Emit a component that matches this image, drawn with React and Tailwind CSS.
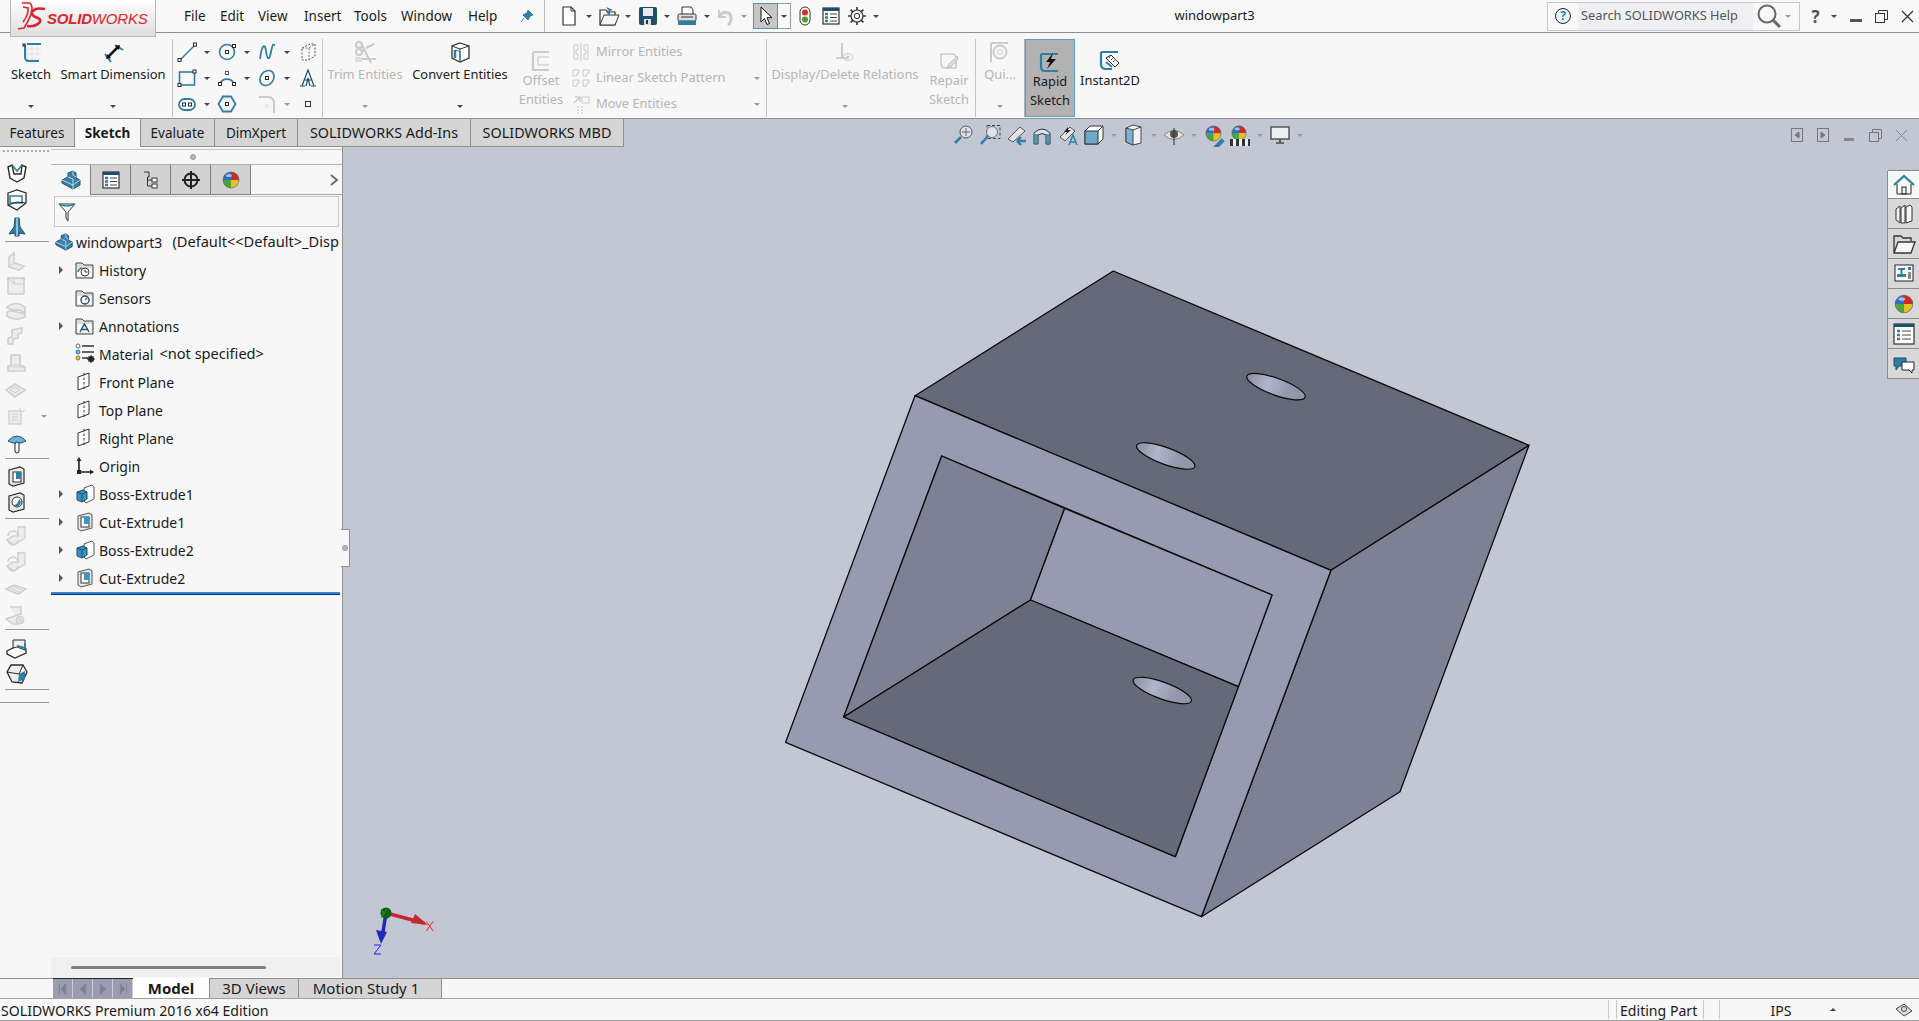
import React from "react";

const blue = "#2e7fa6";
const navy = "#1c4f6e";
const ink = "#2b2b2b";
const off = "#cbcbcb";

const Svg = ({ s = 20, children }) => (
  <svg width={s} height={s} viewBox={`0 0 ${s} ${s}`} fill="none" className="shrink-0">{children}</svg>
);

const Down = ({ off: dim }) => (
  <div className={dim ? "w-0 h-0 border-x-[3px] border-x-transparent border-t-[3px] border-t-[#999]" : "w-0 h-0 border-x-[3px] border-x-transparent border-t-[3px] border-t-[#444]"} />
);

const Pt = ({ x, y, c = ink }) => <rect x={x - 1.5} y={y - 1.5} width="3" height="3" fill="#fff" stroke={c} />;

// ---- ribbon icons
const SketchIco = () => (
  <Svg s={24}>
    <path d="M7 4H22M7 9H22M7 14H22M7 19H22M8 4V22M13 4V22M18 4V22" stroke="#e2e2e2" />
    <path d="M6 5V17Q6 21 10 21H20" stroke={blue} strokeWidth="2" />
    <path d="M8 4H22" stroke={blue} strokeWidth="2" />
    <path d="M3 5H7M5 3V7M3.5 3.5L6.5 6.5M6.5 3.5L3.5 6.5" stroke={navy} />
  </Svg>
);
const DimIco = () => (
  <Svg s={24}>
    <path d="M4 14L10 22M14 5L22 10" stroke={blue} strokeWidth="2" />
    <path d="M7 17L17 7" stroke="#111" strokeWidth="2.5" />
    <path d="M5 19L6 14L10 18Z M19 5L18 10L14 6Z" fill="#111" />
  </Svg>
);
const LineIco = () => (<Svg><path d="M3 18L18 3" stroke={blue} strokeWidth="1.5" /><Pt x={2.5} y={18} /><Pt x={18} y={2.5} /></Svg>);
const RectIco = () => (<Svg><rect x="2.5" y="4" width="15" height="13" stroke={blue} strokeWidth="1.6" /><Pt x={2.5} y={17} /><Pt x={17.5} y={3.5} /></Svg>);
const SlotIco = () => (<Svg><rect x="2" y="5" width="16" height="11" rx="5.5" stroke={blue} strokeWidth="1.8" /><Pt x={7} y={10.5} /><Pt x={13} y={10.5} /></Svg>);
const CircleIco = () => (<Svg><circle cx="10" cy="10" r="7.5" stroke={blue} strokeWidth="1.6" /><Pt x={10} y={10} /><Pt x={17} y={4} /></Svg>);
const ArcIco = () => (<Svg><path d="M3 16A7.5 7.5 0 0 1 17 16" stroke={blue} strokeWidth="1.8" /><Pt x={3} y={16} /><Pt x={17} y={16} /><Pt x={10} y={5} c="#555" /></Svg>);
const HexIco = () => (<Svg><path d="M6 2.5H14L18.5 10L14 17.5H6L1.5 10Z" stroke={blue} strokeWidth="1.8" /><Pt x={10} y={10} /></Svg>);
const SplineIco = () => (<Svg><path d="M3 17C5 2 8 1 9 9S12 20 14 10S16 3 18 3" stroke={blue} strokeWidth="1.8" /></Svg>);
const EllipseIco = () => (<Svg><ellipse cx="10" cy="10" rx="6.5" ry="8" transform="rotate(38 10 10)" stroke={blue} strokeWidth="1.7" /><Pt x={10} y={10} /></Svg>);
const PlaneIco = () => (<Svg><path d="M4 6L12 2H17V14L10 18H4Z" stroke="#555" strokeDasharray="2 1.5" /><path d="M4 6H11V18M11 6L17 2" stroke="#777" strokeDasharray="2 1.5" /></Svg>);
const AIco = () => (<Svg><path d="M2 18H7M13 18H18M4 18L10 2L16 18M7 12H13M8 18L10 10L12 18" stroke={navy} strokeWidth="1.2" /></Svg>);
const FilletIco = () => (<Svg><path d="M2 3H11Q17 3 17 10V19" stroke={off} strokeWidth="2" /><path d="M8 10L12 14M12 10L8 14" stroke="#e0e0e0" /></Svg>);
const PointIco = () => (<Svg><rect x="7.5" y="7.5" width="5" height="5" stroke="#333" fill="#fff" /></Svg>);
const TrimIco = () => (<Svg s={26}><path d="M4 20H24M9 4L19 24M6 8L12 13" stroke={off} strokeWidth="2" /><circle cx="7" cy="6" r="3" stroke={off} strokeWidth="2" /><circle cx="7" cy="13" r="3" stroke={off} strokeWidth="2" /><path d="M14 9L22 5" stroke={off} strokeWidth="2" /><rect x="3" y="18" width="7" height="5" fill="#dedede" /></Svg>);
const ConvertIco = () => (
  <Svg s={24}>
    <path d="M12 3L21 6V18L12 22L4 18V6Z" fill="#fff" stroke="#333" strokeWidth="1.3" />
    <path d="M4 6L12 9L21 6M12 9V22" stroke="#333" />
    <path d="M7 10V18" stroke={blue} strokeWidth="2.5" /><path d="M7 10L12 11.5V20" stroke={blue} />
  </Svg>
);
const OffsetIco = () => (<Svg s={26}><path d="M5 4H21M5 4V22H21" stroke={off} strokeWidth="2.2" /><path d="M10 9H21M10 9V17H21" stroke="#dcdcdc" strokeWidth="2" /></Svg>);
const MirrorIco = () => (<Svg><path d="M3 3H7V8H5V12H7V17H3ZM17 3H13V8H15V12H13V17H17ZM10 1V19" stroke={off} /></Svg>);
const PatternIco = () => (<Svg><path d="M2 2H8V5H6V8H2ZM12 2H18V5H16V8H12ZM2 12H8V15H6V18H2ZM12 12H18V15H16V18H12Z" stroke={off} /></Svg>);
const MoveIco = () => (<Svg><path d="M3 9L9 3M4 3H9V8" stroke={off} strokeWidth="1.5" /><rect x="11" y="3" width="7" height="6" stroke={off} /><path d="M6 13H8M10 13H12M6 16H8M10 16H12M6 19H8M10 19H12" stroke="#dcdcdc" strokeWidth="2" /></Svg>);
const RelIco = () => (<Svg s={24}><path d="M9 3V18M3 18H15" stroke={off} strokeWidth="2" /><ellipse cx="15" cy="17" rx="5" ry="3.5" stroke={off} /><circle cx="15" cy="17" r="1.5" fill={off} /></Svg>);
const RepairIco = () => (<Svg s={24}><path d="M4 5H17L19 8V19H6L4 16Z" stroke={off} strokeWidth="1.6" /><path d="M20 7L12 15L10 19L14 18L21 10Z" fill="#dcdcdc" stroke="#bdbdbd" /></Svg>);
const QuickIco = () => (<Svg s={24}><path d="M3 3H20M3 3V22" stroke={off} strokeWidth="2" /><circle cx="12" cy="12" r="6.5" stroke={off} strokeWidth="2" /><circle cx="12" cy="12" r="2.5" stroke={off} /></Svg>);
const RapidIco = () => (
  <Svg s={24}>
    <path d="M3 4H20M3 4V17Q3 21 7 21H20" stroke={blue} strokeWidth="2.2" />
    <path d="M15 3L8 12H12L9 19L18 9H13Z" fill="#111" />
  </Svg>
);
const InstantIco = () => (
  <Svg s={24}>
    <path d="M3 3H20M3 3V15Q3 20 8 20H14" stroke={blue} strokeWidth="2.2" />
    <path d="M8 9L13 6L21 14L17 18Z" fill="#fff" stroke="#222" />
    <path d="M11 9L12 7.5M13 11L14.5 9.5M15 13L16.5 11.5" stroke="#222" />
    <path d="M8 13L14 18" stroke={blue} strokeWidth="2" />
  </Svg>
);

// ---- quick access icons
const NewIco = () => (<Svg s={22}><path d="M5 2H13L17 6V20H5Z" fill="#fff" stroke="#333" strokeWidth="1.2" /><path d="M13 2V6H17" stroke="#333" /></Svg>);
const OpenIco = () => (<Svg s={24}><path d="M3 21V6H9L11 8H18V21Z" fill="#fff" stroke="#333" strokeWidth="1.2" /><path d="M3 21L7 11H22L18 21Z" fill="#f5f5f5" stroke="#333" /><path d="M9 3L16 6L13 7V12L9 8L12 7Z" fill={blue} /></Svg>);
const SaveIco = () => (<Svg s={24}><rect x="3" y="3" width="18" height="18" rx="2" fill={navy} /><rect x="7" y="4" width="10" height="8" fill="#e9e9e9" /><rect x="8" y="15" width="7" height="6" fill="#ddd" /><rect x="10" y="16" width="2" height="4" fill="#333" /></Svg>);
const PrintIco = () => (<Svg s={24}><path d="M7 3H16L18 6V11H7Z" fill="#fff" stroke="#333" /><rect x="3" y="10" width="18" height="7" rx="1.5" fill="#dfdfdf" stroke="#333" /><rect x="3" y="17" width="18" height="4" fill={blue} /><path d="M6 13H18" stroke="#333" /></Svg>);
const UndoIco = () => (<Svg s={22}><path d="M4 5V12H11" stroke={off} strokeWidth="2" /><path d="M4 12C8 5 17 6 16 15C16 17 14 19 13 20" stroke={off} strokeWidth="3" /></Svg>);
const CursorIco = () => (<Svg s={22}><path d="M6 2V17L9.5 13.5L12 19.5L14.5 18.5L12 12.7H17Z" fill="#fff" stroke="#111" /></Svg>);
const LightIco = () => (<Svg s={20}><rect x="5" y="1" width="10" height="18" rx="5" fill="#fff" stroke="#333" /><circle cx="10" cy="6.5" r="3" fill="#d92b2b" /><circle cx="10" cy="13.5" r="3" fill="#4b9e2a" /></Svg>);
const ListIco = ({ s = 20 }) => (
  <Svg s={s}>
    <rect x="2" y="2" width={s - 4} height={s - 4} fill="#fff" stroke="#333" strokeWidth="1.2" />
    <rect x="2" y="2" width={s - 4} height="3" fill={navy} />
    <path d={s > 20 ? "M5 9H8M5 13H8M5 17H8" : "M4 8H7M4 11.5H7M4 15H7"} stroke={blue} strokeWidth="2.5" />
    <path d={s > 20 ? "M10 9H19M10 13H19M10 17H19" : "M9 8H16M9 11.5H16M9 15H16"} stroke="#444" />
  </Svg>
);
const GearIco = () => (<Svg s={20}><circle cx="10" cy="10" r="6" stroke="#333" strokeWidth="1.2" /><circle cx="10" cy="10" r="2.7" stroke="#333" /><path d="M10 1V4M10 16V19M1 10H4M16 10H19M3.6 3.6L5.8 5.8M14.2 14.2L16.4 16.4M3.6 16.4L5.8 14.2M14.2 5.8L16.4 3.6" stroke="#333" strokeWidth="1.6" /></Svg>);
const Ball = ({ s = 20 }) => (
  <svg width={s} height={s} viewBox="0 0 20 20" className="shrink-0">
    <path d="M10 10V2A8 8 0 0 1 18 10Z" fill="#cf2a2a" />
    <path d="M10 10H18A8 8 0 0 1 10 18Z" fill="#e4c12a" />
    <path d="M10 10V18A8 8 0 0 1 2 10Z" fill="#4aa53a" />
    <path d="M10 10H2A8 8 0 0 1 10 2Z" fill="#2f6fc9" />
    <circle cx="10" cy="10" r="8" fill="none" stroke="#555" strokeWidth=".6" />
    <ellipse cx="8" cy="5.5" rx="3" ry="1.6" fill="#fff" opacity=".55" />
  </svg>
);

// ---- heads-up toolbar
const HuZoomFit = () => (<Svg s={22}><circle cx="13" cy="8" r="6" fill="#dde2ea" stroke="#555" /><path d="M8 13L2 19" stroke={blue} strokeWidth="2.5" /><path d="M13 4V12M9 8H17" stroke="#666" /></Svg>);
const HuZoomArea = () => (<Svg s={22}><rect x="8" y="1.5" width="13" height="13" stroke="#444" strokeDasharray="3 2" /><circle cx="13" cy="8" r="5.5" fill="#dfe4ec" stroke="#777" /><path d="M9 12L2 20" stroke={blue} strokeWidth="2.5" /></Svg>);
const HuPrev = () => (<Svg s={22}><path d="M3 15L15 3L20 7L8 18Z" fill="#e4e4e4" stroke="#555" /><path d="M12 17H21M12 17L16 13M12 17L16 21" stroke={blue} strokeWidth="2.4" /></Svg>);
const HuSection = () => (<Svg s={22}><path d="M3 9Q11 1 19 9V20H15V11Q11 8 7 11V20H3Z" fill="#dfe4ea" stroke="#333" /><path d="M3 10H7V20H3ZM15 10H19V20H15Z" fill={blue} opacity=".75" /></Svg>);
const HuDyn = () => (<Svg s={22}><path d="M3 13L13 3L18 7L8 17Z" fill="#e4e4e4" stroke="#555" /><path d="M11 3L7 8H10L8 11L14 6H11Z" fill="#222" /><path d="M12 21L16 11L20 21M13.5 18H18.5" stroke={blue} strokeWidth="1.4" /></Svg>);
const HuOrient = () => (<Svg s={22}><path d="M2 7L7 2H20V15L15 20H2Z" fill="#fff" stroke="#333" /><rect x="2" y="7" width="13" height="13" fill="#6fa9c9" stroke="#333" /><path d="M15 7L20 2" stroke="#333" /></Svg>);
const HuDisplay = () => (<Svg s={22}><path d="M10 1L18 3V19L10 21L3 18V4Z" fill="#f2f2f2" stroke="#444" /><path d="M3 4L10 6V21L3 18Z" fill="#7fb2cf" stroke="#444" /><path d="M10 6L18 3" stroke="#444" /></Svg>);
const HuEye = () => (<Svg s={22}><path d="M1 11Q11 2 21 11Q11 20 1 11Z" fill="#e3e3e3" stroke="#888" /><circle cx="11" cy="10" r="4" fill="#555" /><path d="M11 4V21" stroke="#333" /></Svg>);
const HuAppear = () => (<div className="relative w-[20px] h-[22px]"><Ball s={19} /><div className="absolute right-[-1px] bottom-0 w-[12px] h-[4px] bg-[#2e7fa6] -rotate-45" /></div>);
const HuScene = () => (<div className="relative w-[20px] h-[22px]"><Ball s={18} /><div className="absolute left-0 bottom-0 w-[20px] h-[7px] bg-[repeating-linear-gradient(90deg,#333_0_3px,#eee_3px_6px)]" /></div>);
const HuMonitor = () => (<Svg s={22}><rect x="2" y="3" width="18" height="12" fill="#eee" stroke="#444" strokeWidth="1.3" /><path d="M11 15V18M7 19H15" stroke="#444" strokeWidth="1.6" /></Svg>);

// ---- left command strip
const Part = ({ s = 22 }) => (
  <svg width={s} height={s} viewBox="0 0 22 22" className="shrink-0">
    <path d="M2 11L8 8V4L13 2L16 4V9L20 11V16L13 20L2 14Z" fill="#3a7fa8" stroke="#1c4f6e" />
    <path d="M2 11L13 16V20M13 16L20 11M8 8L13 10V16M13 2V6L16 8" stroke="#bcd8e8" fill="none" />
  </svg>
);
const StripShape = ({ dim, kind }) => {
  const line = dim ? "#cfcfcf" : "#2b2b2b";
  const fill = dim ? "#ececec" : "#fff";
  const acc = dim ? "#dcdcdc" : blue;
  if (kind === "u") return (<Svg s={24}><path d="M3 6L7 4L9 13L16 13L17 4L21 6L19 17L12 21L5 17Z" fill={fill} stroke={line} strokeWidth="1.4" /><path d="M7 4L12 10L17 4" stroke={acc} strokeWidth="1.5" /></Svg>);
  if (kind === "frame") return (<Svg s={24}><path d="M3 5L12 2L21 5V15L12 22L3 17Z" fill={fill} stroke={line} strokeWidth="1.3" /><path d="M5 8H17V15H5Z" fill="none" stroke={acc} strokeWidth="1.6" /><path d="M3 17L12 14L21 15" stroke={line} /></Svg>);
  if (kind === "post") return (<Svg s={24}><path d="M10 3H14L15 12L20 19L14 18V21H10V18L4 19L9 12Z" fill={acc} stroke={navy} /><path d="M12 3V21" stroke="#fff" /></Svg>);
  if (kind === "mush") return (<Svg s={24}><path d="M3 10Q12 0 21 10L16 12H8Z" fill="#6fb4d8" stroke={navy} /><rect x="10" y="11" width="4" height="11" rx="2" fill="#fff" stroke="#222" /></Svg>);
  if (kind === "cut") return (<Svg s={22}><path d="M4 5L15 2L19 4V18L8 21L4 19Z" fill="#e8e8e8" stroke={line} strokeWidth="1.2" /><rect x="8" y="7" width="8" height="10" fill="#fff" stroke={line} /><rect x="11" y="7" width="5" height="7" fill={blue} /></Svg>);
  if (kind === "cutc") return (<Svg s={22}><path d="M4 5L15 2L19 4V18L8 21L4 19Z" fill="#e8e8e8" stroke={line} strokeWidth="1.2" /><circle cx="12" cy="11" r="5" fill="#fff" stroke={line} /><path d="M8 14Q13 14 14 8L16 11Q15 16 10 16Z" fill={blue} /></Svg>);
  if (kind === "sheet") return (<Svg s={24}><path d="M2 15L12 10L21 13V17L10 22L2 18Z" fill="#fff" stroke={line} strokeWidth="1.3" /><path d="M8 4H20V14L12 11L8 12Z" fill="#eee" stroke={line} /><path d="M12 10L20 12V7" stroke={acc} strokeWidth="2" /></Svg>);
  if (kind === "box") return (<Svg s={24}><path d="M6 3H18L22 10L17 21L7 20L2 10Z" fill="#eee" stroke={line} strokeWidth="1.3" /><path d="M13 20L20 17V9L14 12Z" fill={acc} /><path d="M2 10L14 12L18 3" stroke={line} /></Svg>);
  if (kind === "a") return (<Svg s={22}><path d="M4 7L9 3V13L19 16L14 20L4 17Z" fill={fill} stroke={line} strokeWidth="1.6" /><path d="M9 13L4 17" stroke={line} /></Svg>);
  if (kind === "b") return (<Svg s={22}><rect x="3" y="3" width="16" height="16" fill={fill} stroke={line} strokeWidth="1.6" /><path d="M9 3V9H19M9 9L3 3" stroke={line} /></Svg>);
  if (kind === "c") return (<Svg s={22}><path d="M2 7Q11 0 20 7V13Q13 8 7 11L20 14V17Q10 22 2 16V12L8 10L2 8Z" fill={fill} stroke={line} strokeWidth="1.6" /></Svg>);
  if (kind === "d") return (<Svg s={22}><path d="M7 4L17 2V7L13 8V12L8 13V18H3V12L7 11Z" fill={fill} stroke={line} strokeWidth="1.6" /></Svg>);
  if (kind === "e") return (<Svg s={22}><path d="M6 3H15V13L20 15V19H3V14L6 13Z" fill={fill} stroke={line} strokeWidth="1.6" /><path d="M6 13H15M3 15H20" stroke={line} /></Svg>);
  if (kind === "f") return (<Svg s={22}><path d="M1 11L10 5L20 11L10 18Z" fill={fill} stroke={line} strokeWidth="1.6" /><path d="M5 11L10 8L15 11L10 14Z" stroke={line} /></Svg>);
  if (kind === "g") return (<Svg s={22}><rect x="4" y="5" width="12" height="13" fill={fill} stroke={line} strokeWidth="1.3" /><path d="M14 2L16 5M17 6L20 4M7 8H13M7 11H13M7 14H13" stroke={line} /></Svg>);
  if (kind === "h") return (<Svg s={22}><path d="M13 2H20V13L9 20L2 15L8 11H13Z" fill={fill} stroke={line} strokeWidth="1.4" /><path d="M3 11A5 5 0 0 1 13 11M13 15A5 5 0 0 1 3 15" stroke={line} strokeWidth="1.6" /></Svg>);
  if (kind === "i") return (<Svg s={22}><path d="M1 12L9 8L21 12L13 17Z" fill={fill} stroke={line} strokeWidth="1.6" /><path d="M5 11L14 15M8 9L17 13" stroke={line} /></Svg>);
  return (<Svg s={22}><path d="M5 3H16V10L1 15L8 20H14" fill={fill} stroke={line} strokeWidth="1.6" /><circle cx="15" cy="16" r="4" fill="#ddd" stroke={line} /><path d="M12 13L18 19" stroke={line} /></Svg>);
};

const stripRows = [
  { h: "h-[27px]", kind: "u" },
  { h: "h-[27px]", kind: "frame" },
  { h: "h-[27px]", kind: "post" },
  { sep: "mt-px mb-[6px] ml-[5px]" },
  { h: "h-[25px]", kind: "a", dim: true },
  { h: "h-[25px]", kind: "b", dim: true },
  { h: "h-[25px]", kind: "c", dim: true },
  { h: "h-[27px]", kind: "d", dim: true },
  { h: "h-[26px]", kind: "e", dim: true },
  { h: "h-[27px]", kind: "f", dim: true },
  { h: "h-[27px]", kind: "g", dim: true, arrow: true },
  { h: "h-[25px]", kind: "mush" },
  { sep: "mt-[3px] mb-[4px] ml-[5px]" },
  { h: "h-[26px]", kind: "cut" },
  { h: "h-[26px]", kind: "cutc" },
  { sep: "mt-[3px] mb-[4px] ml-[5px]" },
  { h: "h-[26px]", kind: "h", dim: true },
  { h: "h-[26px]", kind: "h", dim: true },
  { h: "h-[26px]", kind: "i", dim: true },
  { h: "h-[27px]", kind: "j", dim: true },
  { sep: "mt-px mb-[5px] ml-[5px]" },
  { h: "h-[26px]", kind: "sheet" },
  { h: "h-[26px]", kind: "box" },
  { sep: "mt-[2px] ml-[5px]" },
  { sep: "mt-[12px]" },
];

// ---- tree icons
const Folder = ({ children }) => (
  <svg width="20" height="20" viewBox="0 0 20 20" className="shrink-0">
    <path d="M1 18V3H7L9 5H18V18Z" fill="#dcdcdc" stroke="#444" />
    <path d="M2.5 8H16.5V16.5H2.5Z" fill="#fff" />
    {children}
  </svg>
);
const HistoryIco = () => (<Folder><circle cx="10" cy="12" r="4" fill="#fff" stroke="#333" /><path d="M3 12A5 5 0 0 1 7 8" stroke={blue} strokeWidth="1.5" fill="none" /><path d="M10 9.5V12H12.5" stroke="#333" fill="none" /></Folder>);
const SensorIco = () => (<Folder><circle cx="10" cy="12" r="4" fill="#fff" stroke={navy} strokeWidth="1.4" /><path d="M10 12L12.5 9.5" stroke="#d33" strokeWidth="1.3" /></Folder>);
const AnnotIco = () => (<Folder><path d="M5 16L9.5 8L14 16M7 13.5H12" stroke={navy} strokeWidth="1.5" fill="none" /></Folder>);
const MaterialIco = () => (
  <Svg s={22}>
    <circle cx="3" cy="3" r="2" fill="#fff" stroke="#666" /><circle cx="3" cy="9" r="2" fill="#6fb4d8" stroke="#2e7fa6" /><circle cx="3" cy="15" r="2" fill="#e8c42c" stroke="#8c7a1c" />
    <path d="M7 3H19M7 9H19M7 15H13" stroke="#333" strokeWidth="1.6" />
    <circle cx="16" cy="16" r="3" fill="#222" /><circle cx="16" cy="16" r="1" fill="#fff" />
    <path d="M16 12V20M12 16H20M13.5 13.5L18.5 18.5M18.5 13.5L13.5 18.5" stroke="#222" />
  </Svg>
);
const PlaneTree = () => (<Svg s={20}><path d="M3 5L14 1V14L3 18Z" fill="#fff" stroke="#333" /><path d="M9 1V19" stroke="#333" strokeDasharray="2.5 2" /></Svg>);
const OriginIco = () => (<Svg s={20}><path d="M4 3V16H18" stroke="#222" strokeWidth="1.6" /><path d="M4 1L1.5 5H6.5Z M19 16L15 13.5V18.5Z" fill="#222" /><rect x="2" y="14" width="4" height="4" fill="#222" /></Svg>);
const BossIco = () => (
  <Svg s={20}>
    <path d="M9 4L17 1L19 3V15L11 19L9 17Z" fill="#fff" stroke="#555" />
    <path d="M2 8L8 6L12 8V15L7 18L2 16Z" fill="#3b93c4" stroke={navy} />
    <path d="M2 8L7 10V18M7 10L12 8" stroke={navy} />
  </Svg>
);
const CutIco = () => (
  <Svg s={20}>
    <path d="M3 4L14 1L17 3V16L6 19L3 17Z" fill="#e8e8e8" stroke="#555" />
    <rect x="6" y="5" width="8" height="10" fill="#fff" stroke="#333" />
    <rect x="9" y="5" width="5" height="7" fill="#3b93c4" />
  </Svg>
);

const tree = [
  { label: "History", icon: <HistoryIco />, arrow: true },
  { label: "Sensors", icon: <SensorIco /> },
  { label: "Annotations", icon: <AnnotIco />, arrow: true },
  { label: "Material", extra: "<not specified>", icon: <MaterialIco /> },
  { label: "Front Plane", icon: <PlaneTree /> },
  { label: "Top Plane", icon: <PlaneTree /> },
  { label: "Right Plane", icon: <PlaneTree /> },
  { label: "Origin", icon: <OriginIco /> },
  { label: "Boss-Extrude1", icon: <BossIco />, arrow: true },
  { label: "Cut-Extrude1", icon: <CutIco />, arrow: true },
  { label: "Boss-Extrude2", icon: <BossIco />, arrow: true },
  { label: "Cut-Extrude2", icon: <CutIco />, arrow: true },
];

const menu = [
  { label: "File", w: "w-[36px]" },
  { label: "Edit", w: "w-[38px]" },
  { label: "View", w: "w-[46px]" },
  { label: "Insert", w: "w-[50px]" },
  { label: "Tools", w: "w-[47px]" },
  { label: "Window", w: "w-[67px]" },
  { label: "Help", w: "w-[52px]" },
];

const tabs = [
  { label: "Features", w: "w-[75px]" },
  { label: "Sketch", w: "w-[66px]", active: true },
  { label: "Evaluate", w: "w-[74px]" },
  { label: "DimXpert", w: "w-[83px]" },
  { label: "SOLIDWORKS Add-Ins", w: "w-[173px] text-[14.4px]" },
  { label: "SOLIDWORKS MBD", w: "w-[153px] text-[14.4px]" },
];

const Cell = ({ w, children }) => <div className={`${w} h-full flex items-center justify-center shrink-0`}>{children}</div>;

const RibbonBig = ({ w, icon, label, dim }) => (
  <div className={`${w} shrink-0 flex flex-col items-center`}>
    <div className="h-[26px] flex items-center">{icon}</div>
    <div className={dim ? "h-[20px] -mt-px leading-[20px] text-[#b5b5b5] whitespace-nowrap" : "h-[20px] -mt-px leading-[20px] whitespace-nowrap"}>{label}</div>
    <div className="mt-[21px]"><Down off={dim} /></div>
  </div>
);

const RibbonTall = ({ w, icon, lines, dim }) => (
  <div className={`${w} shrink-0 flex flex-col items-center`}>
    <div className="h-[26px] mt-[9px] flex items-center">{icon}</div>
    <div className="-mt-[3px]">
      {lines.map((l) => (
        <div key={l} className={dim ? "h-[19px] leading-[19px] text-center text-[#b5b5b5] whitespace-nowrap" : "h-[19px] leading-[19px] text-center whitespace-nowrap"}>{l}</div>
      ))}
    </div>
  </div>
);

const Divider = () => <div className="w-px h-[78px] bg-[#c4c4c4] shrink-0" />;

const EntityCell = ({ icon, arrow, dim }) => (
  <div className="flex items-center h-[26px]">
    <div className="w-[20px] flex justify-center">{icon}</div>
    <div className="w-[20px] flex justify-center">{arrow && <Down off={dim} />}</div>
  </div>
);

const ListRow = ({ icon, label, arrow }) => (
  <div className="h-[26px] flex items-center">
    <div className="w-[20px] ml-[2px]">{icon}</div>
    <div className="ml-[5px] w-[151px] text-[#b5b5b5] whitespace-nowrap">{label}</div>
    {arrow && <div className="ml-[7px]"><Down off /></div>}
  </div>
);

const Model = () => (
  <svg viewBox="343 147 1576 831" className="absolute inset-0 w-full h-full">
    <defs>
      <linearGradient id="hole" x1="0" x2="1" y1="0" y2="0">
        <stop offset="0" stopColor="#8a8ea3" />
        <stop offset=".35" stopColor="#b0b5cb" />
        <stop offset=".7" stopColor="#9599ae" />
        <stop offset="1" stopColor="#8f93a8" />
      </linearGradient>
    </defs>
    <g stroke="#0a0a0a" strokeWidth="1.3" strokeLinejoin="round">
      <polygon points="1113.3,271 1529,445.3 1331,570.3 915,395.7" fill="#666977" />
      <polygon points="1331,570.3 1529,445.3 1400,791.7 1201.4,916.7" fill="#7e8094" />
      <path fillRule="evenodd" d="M915 395.7L1331 570.3L1201.4 916.7L785.6 742.3ZM941.7 456L843.7 717L1175.3 856.7L1272 595Z" fill="#979bb1" />
      <polygon points="941.7,456 1064.7,508.3 1030.5,600 843.7,717" fill="#7e8094" />
      <polygon points="1064.7,508.3 1272,595 1238.4,686.7 1030.5,600" fill="#979bb1" />
      <polygon points="1030.5,600 1238.4,686.7 1175.3,856.7 843.7,717" fill="#666977" />
    </g>
    <g stroke="#0a0a0a" strokeWidth="1.2" fill="url(#hole)">
      <ellipse cx="1276" cy="386.7" rx="31" ry="8.4" transform="rotate(20 1276 386.7)" />
      <ellipse cx="1165.7" cy="456" rx="31" ry="8.4" transform="rotate(20 1165.7 456)" />
      <ellipse cx="1162.3" cy="690.5" rx="31" ry="8.4" transform="rotate(20 1162.3 690.5)" />
    </g>
    <path d="M386 913L424 923" stroke="#c8262c" strokeWidth="3.5" />
    <path d="M428 925L411 923L415 914Z" fill="#c8262c" />
    <path d="M386 913L382 938" stroke="#2328b8" strokeWidth="3.5" />
    <path d="M381 944L376 930L387 932Z" fill="#2328b8" />
    <circle cx="386" cy="913" r="5.5" fill="#115c16" />
    <path d="M381 909L384 914M387 909L381 918" stroke="#1a9c22" />
    <path d="M426.5 921.5L433 931M433 921.5L426.5 931" stroke="#ff2020" />
    <path d="M374 945H381L374 954H381" stroke="#2020ff" fill="none" />
  </svg>
);

const paneIcons = [
  <Svg s={24} key="home"><path d="M2 12L12 3L22 12" stroke={blue} strokeWidth="2.2" /><path d="M5 11V21H19V11" stroke="#222" /><rect x="10" y="14" width="4" height="7" stroke="#222" /></Svg>,
  <Svg s={24} key="parts"><path d="M4 7L8 4V21L4 18ZM9 6L13 3V21L9 21ZM14 5L18 3L20 5V19L14 21Z" fill="#f5f5f5" stroke="#333" /></Svg>,
  <Svg s={24} key="open"><path d="M2 20V4H9L11 6H19V9" stroke="#333" strokeWidth="1.3" /><path d="M2 21L6 10H23L19 21Z" fill="#f5f5f5" stroke="#333" strokeWidth="1.3" /></Svg>,
  <Svg s={24} key="view"><rect x="3" y="3" width="18" height="16" fill="#fff" stroke="#222" /><path d="M6 6H13V8H10.5V12H14V15H5V12H8.5V8H6Z" fill={blue} /><rect x="16" y="5" width="3" height="3" fill={blue} /><rect x="16" y="10" width="3" height="7" fill="#888" /></Svg>,
  <Ball s={22} key="ball" />,
  <ListIco s={24} key="list" />,
  <Svg s={24} key="chat"><path d="M2 6H14V14H7L4 18V14H2Z" fill={blue} stroke={navy} /><path d="M10 10H22V18H20V21L17 18H10Z" fill="#fff" stroke="#222" /></Svg>,
];

export default function App() {
  return (
    <div className="w-[1919px] h-[1021px] flex flex-col overflow-hidden bg-[#f7f7f7] text-[#1a1a1a] text-[13.5px] font-['Noto_Sans',sans-serif]">
      {/* title bar */}
      <div className="h-[33px] shrink-0 flex border-b border-[#8f8f8f] bg-[#f8f8f8]">
        <div className="ml-[10px] w-[146px] h-[37px] shrink-0 z-10 flex items-center pl-[6px] border border-t-0 border-[#b5b5b5] bg-gradient-to-b from-white to-[#dedede]">
          <svg width="30" height="30" viewBox="0 0 30 30" className="shrink-0 -mt-[4px]">
            <path d="M5 2H13Q19 8 7 27L1 28M6 6L11 7Q12 13 6 21" stroke="#d8262c" strokeWidth="1.6" fill="none" />
            <path d="M28 8Q18 6 15 11Q14 15 21 17Q25 19 22 22Q18 26 10 25" stroke="#d8262c" strokeWidth="2.6" fill="none" />
          </svg>
          <span className="text-[15px] italic font-bold tracking-[-0.2px] text-[#d8262c] font-['Liberation_Sans',sans-serif] leading-none">SOLID</span>
          <span className="text-[15px] italic tracking-[-0.2px] text-[#d8262c] font-['Liberation_Sans',sans-serif] leading-none">WORKS</span>
        </div>
        <div className="ml-[28px] flex items-center">
          {menu.map((m) => (
            <div key={m.label} className={m.w}>{m.label}</div>
          ))}
        </div>
        <div className="w-[16px] flex items-center">
          <svg width="14" height="14" viewBox="0 0 14 14"><path d="M8 1L13 6L10 7L8 11L3 6L7 4ZM4 9L1 13" fill={blue} stroke={blue} /></svg>
        </div>
        <div className="ml-[8px] w-px h-full bg-[#b8b8b8]" />
        <div className="w-[15px]" />
        <div className="flex items-center">
          <Cell w="w-[20px]"><NewIco /></Cell>
          <Cell w="w-[19px]"><Down /></Cell>
          <Cell w="w-[21px]"><OpenIco /></Cell>
          <Cell w="w-[18px]"><Down /></Cell>
          <Cell w="w-[21px]"><SaveIco /></Cell>
          <Cell w="w-[18px]"><Down /></Cell>
          <Cell w="w-[21px]"><PrintIco /></Cell>
          <Cell w="w-[19px]"><Down /></Cell>
          <Cell w="w-[20px]"><UndoIco /></Cell>
          <Cell w="w-[16px]"><Down off /></Cell>
          <div className="ml-[1px] w-[25px] h-[26px] bg-[#c6c6c6] border border-[#4f93bd] flex items-center justify-center"><CursorIco /></div>
          <div className="w-[13px] h-[26px] border border-l-0 border-[#9a9a9a] flex items-center justify-center"><Down /></div>
          <Cell w="w-[27px]"><LightIco /></Cell>
          <Cell w="w-[26px]"><ListIco /></Cell>
          <Cell w="w-[26px]"><GearIco /></Cell>
          <Cell w="w-[12px]"><Down /></Cell>
        </div>
        <div className="w-[682px] flex items-center justify-center text-[13px]">windowpart3</div>
        <div className="ml-auto flex items-center pr-[2px]">
          <div className="w-[253px] h-[29px] border border-[#c8c8c8] flex items-center">
            <div className="w-[30px] flex justify-center">
              <div className="w-[16px] h-[16px] rounded-full border border-[#222] bg-[#e8f2f8] flex items-center justify-center text-[12px] font-bold text-[#2e7fa6] leading-none">?</div>
            </div>
            <div className="w-[175px] h-full bg-[#eef0f4] flex items-center pl-[3px] text-[12.8px] text-[#555] whitespace-nowrap">Search SOLIDWORKS Help</div>
            <div className="w-[32px] flex justify-center">
              <svg width="26" height="26" viewBox="0 0 26 26"><circle cx="11" cy="11" r="8.5" stroke="#666" strokeWidth="2" fill="none" /><path d="M17 17L24 24" stroke="#666" strokeWidth="3" /></svg>
            </div>
            <Down off />
          </div>
          <div className="w-[31px] text-center text-[17px] font-bold text-[#555] leading-none">?</div>
          <Down />
          <div className="ml-[13px] w-[12px] h-[3px] mt-[8px] bg-[#555]" />
          <div className="ml-[13px]">
            <svg width="13" height="13" viewBox="0 0 13 13" fill="none" stroke="#333"><rect x=".5" y="3.5" width="9" height="9" /><path d="M3.5 3.5V.5H12.5V9.5H9.5" /></svg>
          </div>
          <div className="ml-[13px] mr-[3px]">
            <svg width="13" height="13" viewBox="0 0 13 13" stroke="#333" strokeWidth="1.2"><path d="M1 1L12 12M12 1L1 12" /></svg>
          </div>
        </div>
      </div>

      {/* ribbon */}
      <div className="h-[86px] shrink-0 flex pt-[6px] border-b border-[#8f8f8f] text-[12.9px]">
        <RibbonBig w="w-[62px]" icon={<SketchIco />} label="Sketch" />
        <RibbonBig w="w-[102px]" icon={<DimIco />} label="Smart Dimension" />
        <div className="w-[8px]" />
        <Divider />
        <div className="w-[149px] shrink-0 pl-[4px] grid grid-cols-[40px_40px_41px_28px] auto-rows-[26px]">
          <EntityCell icon={<LineIco />} arrow />
          <EntityCell icon={<CircleIco />} arrow />
          <EntityCell icon={<SplineIco />} arrow />
          <EntityCell icon={<PlaneIco />} />
          <EntityCell icon={<RectIco />} arrow />
          <EntityCell icon={<ArcIco />} arrow />
          <EntityCell icon={<EllipseIco />} arrow />
          <EntityCell icon={<AIco />} />
          <EntityCell icon={<SlotIco />} arrow />
          <EntityCell icon={<HexIco />} />
          <EntityCell icon={<FilletIco />} arrow dim />
          <EntityCell icon={<PointIco />} />
        </div>
        <Divider />
        <RibbonBig w="w-[84px]" icon={<TrimIco />} label="Trim Entities" dim />
        <RibbonBig w="w-[106px]" icon={<ConvertIco />} label="Convert Entities" />
        <RibbonTall w="w-[56px]" icon={<OffsetIco />} lines={["Offset", "Entities"]} dim />
        <div className="w-[197px] shrink-0">
          <ListRow icon={<MirrorIco />} label="Mirror Entities" />
          <ListRow icon={<PatternIco />} label="Linear Sketch Pattern" arrow />
          <ListRow icon={<MoveIco />} label="Move Entities" arrow />
        </div>
        <Divider />
        <RibbonBig w="w-[156px]" icon={<RelIco />} label="Display/Delete Relations" dim />
        <RibbonTall w="w-[52px]" icon={<RepairIco />} lines={["Repair", "Sketch"]} dim />
        <Divider />
        <RibbonBig w="w-[48px]" icon={<QuickIco />} label="Qui..." dim />
        <div className="w-px h-[78px] bg-[#9fb4c4] shrink-0" />
        <div className="w-[50px] h-[78px] shrink-0 bg-[#b2b2b2] border border-[#5a9ec9]">
          <RibbonTall w="w-full" icon={<RapidIco />} lines={["Rapid", "Sketch"]} />
        </div>
        <RibbonTall w="w-[70px]" icon={<InstantIco />} lines={["Instant2D"]} />
      </div>

      {/* command tabs, heads-up toolbar */}
      <div className="h-[28px] shrink-0 flex bg-[#c3c7d3]">
        {tabs.map((t) => (
          <div
            key={t.label}
            className={t.active
              ? `${t.w} h-full pt-px flex items-center justify-center font-bold bg-[#f7f7f7] border-r border-[#8f8f8f]`
              : `${t.w} h-full pt-px flex items-center justify-center bg-[#d5d5d5] border-r border-b border-[#8f8f8f]`}
          >
            {t.label}
          </div>
        ))}
        <div className="ml-[327px] flex items-center h-[32px]">
          <Cell w="w-[26px]"><HuZoomFit /></Cell>
          <Cell w="w-[26px]"><HuZoomArea /></Cell>
          <Cell w="w-[26px]"><HuPrev /></Cell>
          <Cell w="w-[26px]"><HuSection /></Cell>
          <Cell w="w-[26px]"><HuDyn /></Cell>
          <Cell w="w-[26px]"><HuOrient /></Cell>
          <Cell w="w-[14px]"><Down off /></Cell>
          <Cell w="w-[26px]"><HuDisplay /></Cell>
          <Cell w="w-[14px]"><Down off /></Cell>
          <Cell w="w-[26px]"><HuEye /></Cell>
          <Cell w="w-[14px]"><Down off /></Cell>
          <Cell w="w-[26px]"><HuAppear /></Cell>
          <Cell w="w-[26px]"><HuScene /></Cell>
          <Cell w="w-[14px]"><Down off /></Cell>
          <Cell w="w-[26px]"><HuMonitor /></Cell>
          <Cell w="w-[14px]"><Down off /></Cell>
        </div>
        <div className="ml-auto flex items-center h-[32px] pr-[5px]">
          <Cell w="w-[26px]"><svg width="12" height="14" viewBox="0 0 12 14" stroke="#777" fill="none"><rect x=".5" y=".5" width="11" height="13" /><path d="M8 4L4 7L8 10Z" fill="#777" /></svg></Cell>
          <Cell w="w-[26px]"><svg width="12" height="14" viewBox="0 0 12 14" stroke="#777" fill="none"><rect x=".5" y=".5" width="11" height="13" /><path d="M4 4L8 7L4 10Z" fill="#777" /></svg></Cell>
          <Cell w="w-[26px]"><div className="w-[10px] h-[3px] mt-[8px] bg-[#888]" /></Cell>
          <Cell w="w-[26px]"><svg width="13" height="13" viewBox="0 0 13 13" fill="none" stroke="#777"><rect x=".5" y="3.5" width="9" height="9" /><path d="M3.5 3.5V.5H12.5V9.5H9.5" /></svg></Cell>
          <Cell w="w-[26px]"><svg width="13" height="13" viewBox="0 0 13 13" stroke="#888"><path d="M1 1L12 12M12 1L1 12" /></svg></Cell>
        </div>
      </div>

      {/* main */}
      <div className="h-[831px] shrink-0 flex">
        <div className="w-[343px] shrink-0 flex relative z-10 border-r border-[#8f8f8f] bg-[#f7f7f7]">
          <div className="w-[51px] shrink-0 flex flex-col">
            <div className="h-[12px] pt-[3px] pl-[3px] pr-[2px]">
              <div className="h-[2px] bg-[repeating-linear-gradient(90deg,#aaa_0_2px,transparent_2px_4px)]" />
            </div>
            {stripRows.map((r, i) =>
              r.sep ? (
                <div key={i} className={`${r.sep} mr-[2px] h-px bg-[#999] shrink-0`} />
              ) : (
                <div key={i} className={`${r.h} relative shrink-0 flex items-center justify-start pl-[5px]`}>
                  <StripShape kind={r.kind} dim={r.dim} />
                  {r.arrow && <div className="ml-[14px]"><Down off /></div>}
                </div>
              )
            )}
          </div>
          <div className="flex-1 min-w-0 flex flex-col">
            <div className="mt-[2px] h-px bg-[#c4c4c4]" />
            <div className="h-[14px] flex items-center justify-center pr-[5px] -translate-x-[1px]">
              <div className="w-[6px] h-[6px] rounded-full bg-[#b8b8b8] border border-[#999]" />
            </div>
            <div className="h-px bg-[#b0b0b0]" />
            <div className="h-[30px] flex border-b border-[#a8a8a8]">
              <div className="w-[40px] flex items-center justify-center bg-[#f7f7f7] border-r border-[#7f7f7f] -mb-px"><Part /></div>
              <div className="w-[40px] flex items-center justify-center bg-[#d2d2d2] border-r border-b border-[#7f7f7f] -mb-px"><ListIco /></div>
              <div className="w-[40px] flex items-center justify-center bg-[#d2d2d2] border-r border-b border-[#7f7f7f] -mb-px">
                <Svg s={20}><path d="M3 2H8V7H6.5V16H11M6.5 10H11" stroke="#333" /><rect x="11" y="8" width="5" height="4" fill="#fff" stroke="#333" /><rect x="11" y="14" width="5" height="4" fill="#fff" stroke="#333" /></Svg>
              </div>
              <div className="w-[40px] flex items-center justify-center bg-[#d2d2d2] border-r border-b border-[#7f7f7f] -mb-px">
                <Svg s={20}><circle cx="10" cy="10" r="6.5" stroke="#222" strokeWidth="2" /><path d="M10 1V19M1 10H19" stroke="#222" strokeWidth="2" /></Svg>
              </div>
              <div className="w-[40px] flex items-center justify-center bg-[#d2d2d2] border-r border-b border-[#7f7f7f] -mb-px"><Ball /></div>
              <div className="ml-auto mr-[3px] flex items-center">
                <svg width="10" height="14" viewBox="0 0 10 14" fill="none" stroke="#666" strokeWidth="1.8"><path d="M2 2L8 7L2 12" /></svg>
              </div>
            </div>
            <div className="ml-[3px] mr-[3px] mt-px h-[31px] shrink-0 border border-[#c8c8c8] flex items-center pl-[2px]">
              <svg width="20" height="22" viewBox="0 0 20 22" fill="none" stroke="#333"><path d="M2 3H18L11 11V20L9 17V11Z" fill="#fff" /><path d="M2 3Q10 7 18 3" stroke={blue} strokeWidth="1.5" /></svg>
            </div>
            <div className="h-[28px] mt-px mr-[2px] shrink-0 flex items-center pl-[3px] overflow-hidden whitespace-pre text-[14px]">
              <Part s={20} />
              <span className="ml-[2px]">windowpart3</span>
              <span className="ml-[10px] text-[14.6px]">(Default&lt;&lt;Default&gt;_Disp</span>
            </div>
            {tree.map((t) => (
              <div key={t.label} className="h-[28px] shrink-0 flex items-center whitespace-pre text-[14px]">
                <div className="w-[24px] pl-[8px]">
                  {t.arrow && <div className="w-0 h-0 border-y-[4px] border-y-transparent border-l-[4px] border-l-[#555]" />}
                </div>
                <div className="w-[24px] flex items-center">{t.icon}</div>
                <span>{t.label}</span>
                {t.extra && <span className="ml-[6px] text-[14.6px]">{t.extra}</span>}
              </div>
            ))}
            <div className="h-[3px] shrink-0 mr-[2px] bg-[#2d8ac9] border-b border-[#1c1c8c]" />
            <div className="flex-1" />
            <div className="h-[20px] mr-[2px] shrink-0 bg-[#f0f0f0] flex items-center pl-[20px]">
              <div className="w-[195px] h-[3px] rounded-full bg-[#808080]" />
            </div>
            <div className="h-px" />
          </div>
          {/* flap */}
          <div className="absolute left-[341px] top-[382px] w-[9px] h-[38px] bg-[#f7f7f7] border border-l-0 border-[#8f8f8f] flex items-center justify-center">
            <div className="w-[6px] h-[6px] rounded-full bg-[#b8b8b8] border border-[#999]" />
          </div>
        </div>
        <div className="flex-1 relative bg-[#c3c7d3] overflow-hidden">
          <Model />
          <div className="absolute right-0 top-[24px] w-[32px] border-l border-[#8a8a8a]">
            {paneIcons.map((ic, i) => (
              <div key={i} className={i === 0 ? "h-[29px] -mt-px flex items-center justify-center bg-[#f7f7f7] border-t border-b border-[#8a8a8a]" : "h-[30px] flex items-center justify-center bg-[#d8d8d8] border-b border-[#8a8a8a]"}>{ic}</div>
            ))}
          </div>
        </div>
      </div>

      {/* model tabs */}
      <div className="h-[20px] shrink-0 flex border-t border-[#8f8f8f] bg-[#f7f7f7] text-[15px]">
        <div className="ml-[53px] w-[80px] flex border-t border-[#222] bg-[#9a9db0] -mt-px">
          {["M6 3V15M13 3L8 9L13 15Z", "M13 3L7 9L13 15Z", "M7 3L13 9L7 15Z", "M14 3V15M7 3L12 9L7 15Z"].map((d) => (
            <div key={d} className="w-[20px] h-full flex items-center justify-center border-r border-[#c9cbd5]">
              <svg width="18" height="18" viewBox="0 0 20 18"><path d={d} fill="#7e8195" stroke="#7e8195" /></svg>
            </div>
          ))}
        </div>
        <div className="w-[76px] flex items-center justify-center bg-white font-bold -mt-px">Model</div>
        <div className="w-[90px] flex items-center justify-center bg-[#d5d5d5] border-l border-r border-[#8f8f8f]">3D Views</div>
        <div className="w-[143px] flex items-center justify-center pr-[8px] bg-[#d5d5d5] border-r border-[#8f8f8f]">Motion Study 1</div>
      </div>

      {/* status bar */}
      <div className="h-[23px] shrink-0 flex border-t border-b border-[#a0a0a0] items-center text-[14.1px]">
        <div className="pl-[1px] pt-[3px] w-[1608px] whitespace-nowrap">SOLIDWORKS Premium 2016 x64 Edition</div>
        <div className="w-px h-[19px] bg-[#c8c8c8]" />
        <div className="w-[7px]" />
        <div className="w-px h-[19px] bg-[#c8c8c8]" />
        <div className="w-[86px] pl-[3px] pt-[3px] whitespace-nowrap">Editing Part</div>
        <div className="w-px h-[19px] bg-[#c8c8c8]" />
        <div className="w-[15px]" />
        <div className="w-px h-[19px] bg-[#c8c8c8]" />
        <div className="w-[110px] text-center pl-[12px] pt-[3px]">IPS</div>
        <div className="w-0 h-0 border-x-[3px] border-x-transparent border-b-[3px] border-b-[#444]" />
        <div className="ml-[59px]">
          <svg width="18" height="16" viewBox="0 0 18 16" fill="#ddd" stroke="#444"><path d="M1 7L9 2L17 9L9 14Z" /><circle cx="9" cy="7" r="2.5" /></svg>
        </div>
      </div>
    </div>
  );
}
